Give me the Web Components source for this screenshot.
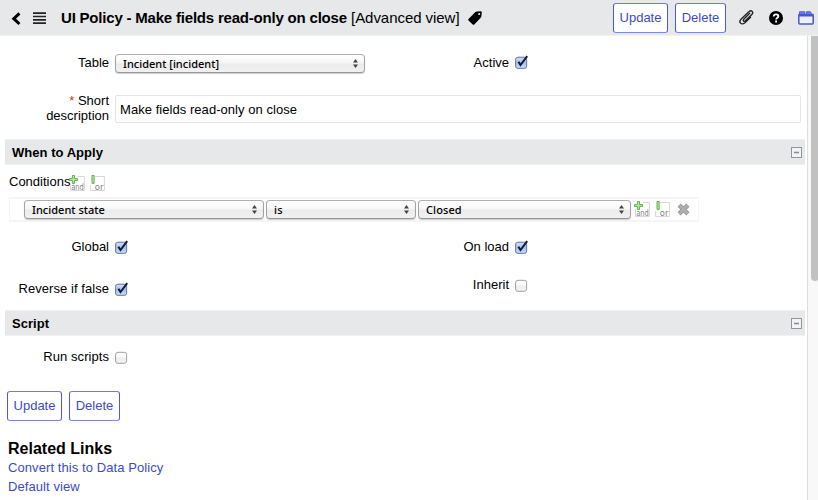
<!DOCTYPE html>
<html lang="en"><head><meta charset="utf-8"><title>UI Policy</title>
<style>
html,body{margin:0;height:100%;overflow:hidden;background:#fff;color:#000;font:13px/15px "Liberation Sans",Arial,sans-serif}
</style></head><body>
<policy-page></policy-page>
<script>
const define=(name,html)=>customElements.define(name,class extends HTMLElement{
  constructor(){super();const t=document.createElement('template');t.innerHTML=html;
    this.attachShadow({mode:'open'}).append(t.content.cloneNode(true));}
});

define('push-button',`<style>
:host{display:block;box-sizing:border-box;height:30px;border:1px solid #4a5bd2;border-top-color:#6d7ddc;border-bottom-color:#7a88df;border-radius:3px;background:#fff;color:#3c4bcb;text-align:center;line-height:28px;white-space:nowrap}
</style><slot></slot>`);

define('select-box',`<style>
:host{display:flex;box-sizing:border-box;height:19px;border:1px solid #a2a2a2;border-top-color:#b0b0b0;border-bottom-color:#979797;border-radius:4px;background:linear-gradient(#fff,#f6f6f6 48%,#ebebeb 52%,#f1f1f1);box-shadow:0 1px 1px #ccc;padding:0 6px 0 7px;align-items:center;justify-content:space-between;font:500 11px/16px "Noto Sans","Open Sans",sans-serif;letter-spacing:var(--track,.3px);white-space:nowrap}
svg{display:block;flex:none}
</style><span><slot></slot></span><svg width="5" height="9" viewBox="0 0 5 9" fill="#444"><path d="M2.5 0 5 3.5H0ZM0 5.5H5L2.5 9Z"/></svg>`);

define('check-box',`<style>
:host{display:block;width:15px;height:16px}
svg{display:block;overflow:visible}
.tick,.on{display:none}:host([checked]) .tick,:host([checked]) .on{display:block}
</style><svg width="15" height="16" viewBox="0 0 15 16">
<defs><linearGradient id="a" x2="0" y2="1"><stop stop-color="#fff"/><stop offset=".45" stop-color="#fafafa"/><stop offset=".55" stop-color="#eee"/><stop offset="1" stop-color="#f6f6f6"/></linearGradient>
<linearGradient id="b" x2="0" y2="1"><stop stop-color="#d5e2f6"/><stop offset=".5" stop-color="#9fc0eb"/><stop offset="1" stop-color="#c6e5fb"/></linearGradient></defs>
<rect x=".6" y="3.3" width="11" height="11" rx="2.4" fill="url(#a)" stroke="#a0a0a0"/>
<rect class="on" x=".6" y="3.3" width="11" height="11" rx="2.2" fill="url(#b)" stroke="#6f7fb0"/>
<path class="tick" d="M3.4 7.7 5.5 11 12.2 2.1" fill="none" stroke="#121a36" stroke-width="2"/></svg>`);

define('form-field',`<style>
:host{display:grid;grid-template-columns:109px 1fr;column-gap:6px}
.l{text-align:right;white-space:nowrap}
</style><div class="l"><slot name="label"></slot></div><div><slot></slot></div>`);

define('section-bar',`<style>
:host{display:flex;box-sizing:border-box;height:26px;margin:0 2px 0 5px;padding:0 3px 0 7px;background:#e6e8ea;border-top:1px solid #f0f1f2;border-bottom:1px solid #f0f1f2;align-items:center;justify-content:space-between;font-weight:bold;letter-spacing:.03px}
</style><span><slot></slot></span><svg width="11" height="11"><rect x=".5" y=".5" width="10" height="10" fill="#f2f3f5" stroke="#92969c"/><path d="M3 5.5h5" stroke="#8a8e94" stroke-width="1.6"/></svg>`);

define('and-or',`<style>
:host{display:flex;gap:4px;height:16px}
svg{display:block;overflow:visible}
text{font:9px "DejaVu Sans Condensed","DejaVu Sans",sans-serif;fill:#808080}
</style><svg width="16" height="16"><path d="M8.5 1.5h6.9v14H1.5V8" fill="#fff" stroke="#d8d8d8"/><path d="M3.4.5h2.1v3H8.5v2H5.5v3H3.4v-3H.5v-2h2.9Z" fill="#b4e39b" stroke="#69b452"/><text x="2.2" y="14.7" textLength="12.6" lengthAdjust="spacingAndGlyphs">and</text></svg>
<svg width="16" height="16"><path d="M6 1.5h9.4v14H1.5V10" fill="#fff" stroke="#d8d8d8"/><path d="M3 .5h2.1v7.8H3Z" fill="#c2e8ad" stroke="#5faf45"/><text x="5.8" y="14.7" textLength="8.6" lengthAdjust="spacingAndGlyphs">or</text></svg>`);

define('title-bar',`<style>
:host{display:flex;box-sizing:border-box;height:36px;padding:0 4px 0 11px;background:#e6e8ea;border-bottom:1px solid #f1f2f3;align-items:center}
svg{display:block;flex:none;overflow:visible}
h1{margin:0;font:bold 15px/18px "Liberation Sans",Arial,sans-serif;white-space:nowrap;padding:1px 0 0 15px}
h1 span{font-weight:normal}
.gap{flex:1}.one{letter-spacing:-.2px}.two{letter-spacing:-.05px}
push-button{margin-right:7px}
</style>
<svg width="10" height="14" viewBox="0 0 10 14"><path d="M8.4 1.7 2.8 7l5.6 5.3" transform="translate(0 .7)" fill="none" stroke="#000" stroke-width="3"/></svg>
<svg style="margin-left:12px" width="13" height="12"><path d="M0 1.2h13M0 4.5h13M0 7.8h13M0 11.1h13" stroke="#222" stroke-width="1.7"/></svg>
<h1><b class="one">UI Policy - Make fields read-only on close</b> <span class="two">[Advanced view]</span></h1>
<svg style="margin-left:8px" width="14" height="14" viewBox="0 0 14 14"><path d="M7.4 1.1Q8 .4 9 .4L12.6.3Q13.8.3 13.8 1.6L13.4 5.2Q13.3 6 12.7 6.7L6.3 13.4Q5.5 14.1 4.7 13.4L.5 9.6Q-.2 8.8.5 8ZM11.2 2.1a1 1 0 1 0 .1 2A1 1 0 0 0 11.2 2.1Z" fill-rule="evenodd"/></svg>
<div class="gap"></div>
<push-button style="width:55px">Update</push-button><push-button style="width:51px">Delete</push-button>
<svg style="margin-left:6px" width="15" height="15" viewBox="0 0 15 15" fill="none" stroke="#222" stroke-width="1.35" stroke-linecap="round"><path d="M10.7 3.3 4.7 9.3Q3.8 10.3 4.5 11T6.3 10.8L12.8 4.5Q14.6 2.7 13.2 1.4T9.8 1.7L2.2 8.9Q-.2 11.3 1.5 13.1T6 12.7L11.6 7.3"/></svg>
<svg style="margin-left:15px" width="14" height="14"><circle cx="7" cy="7" r="7"/><path d="M4.7 5.5C4.8 3.9 5.7 3.3 7 3.3S9.4 4 9.4 5.2C9.4 6.8 7.2 6.7 7.2 8.5M7.1 9.6v1.9" fill="none" stroke="#fff" stroke-width="1.8"/></svg>
<svg style="margin-left:15px" width="16" height="14" viewBox="0 0 16 14"><path d="M1.5.8h5.2v3H1.5ZM8.3.8h4.2l1.4 3H8.3Z" fill="#6f80df" stroke="#4e60d4"/><rect x=".8" y="4.3" width="14.4" height="8.6" rx="1" fill="#eef0fa" stroke="#4658d2" stroke-width="1.5"/><path d="M.2 4.2h15.6" stroke="#4658d2" stroke-width="2.6"/></svg>`);

define('condition-row',`<style>
:host{display:flex;box-sizing:border-box;width:690px;height:25px;margin-left:9px;border:2px solid #f5f5f5;border-width:2px 1px;padding:1px 0 0 14px;gap:2px;align-items:flex-start}
and-or{margin:1px 0 0 1px}
svg{display:block;margin:3px 0 0 5px}
</style>
<select-box style="width:240px;--track:.02px">Incident state</select-box>
<select-box style="width:150px">is</select-box>
<select-box style="width:213px;--track:.1px">Closed</select-box>
<and-or></and-or>
<svg width="13" height="13"><path d="M2.1 2.1l8.8 8.8M10.9 2.1l-8.8 8.8" stroke="#979797" stroke-width="4.4"/><path d="M2.4 2.4l8.2 8.2M10.6 2.4l-8.2 8.2" stroke="#b0b0b0" stroke-width="2.6"/></svg>`);

define('related-links',`<style>
:host{display:block;padding:18px 0 0 8px}
h2{margin:0;font:bold 16px/19px "Liberation Sans",Arial,sans-serif}
a{display:block;color:#3c4bcb;line-height:19px;width:max-content;letter-spacing:.08px}
</style><h2>Related Links</h2><a>Convert this to Data Policy</a><a>Default view</a>`);

define('policy-page',`<style>
:host{display:flex;flex-direction:column;height:500px;overflow:hidden}
.body{display:flex;flex:1;min-height:0}
main{width:807px;flex:none}
.rail{flex:1;box-sizing:border-box;border-left:1px solid #dedede;background:#f8f8f8;display:flex;justify-content:flex-end}
.thumb{width:8px;height:245px;background:#c1c1c1;border-radius:0 0 4px 4px;margin-right:-1px}
.row{display:grid;grid-template-columns:400px 1fr;align-items:start;box-sizing:border-box}
.input{box-sizing:border-box;width:686px;height:28px;border:1px solid #e4e4e4;border-radius:2px;padding:1px 0 0 4px;line-height:26px;letter-spacing:.05px}
.req{color:#c0392b}
.down{display:inline-block;padding-top:1px}
.short{margin-top:-2px}
.cond{display:flex;padding-left:9px}
.buttons{display:flex;gap:7px;padding-left:7px}
</style>
<title-bar></title-bar>
<div class="body"><main>
<div class="row" style="height:59px;padding-top:18px">
<form-field><span slot="label" class="down">Table</span><select-box style="width:250px;--track:0px">Incident [incident]</select-box></form-field>
<form-field><span slot="label" class="down">Active</span><check-box checked></check-box></form-field></div>
<form-field style="height:44px"><div slot="label" class="short"><span class="req">*</span> Short<br>description</div><div class="input">Make fields read-only on close</div></form-field>
<section-bar>When to Apply</section-bar>
<div style="height:32px;padding-top:9px;box-sizing:border-box"><div class="cond"><span>Conditions</span><and-or style="margin:1px 0 0 -1px"></and-or></div></div>
<condition-row></condition-row>
<div class="row" style="height:43px;padding-top:17px">
<form-field><span slot="label">Global</span><check-box checked></check-box></form-field>
<form-field><span slot="label">On load</span><check-box checked></check-box></form-field></div>
<div class="row" style="height:45px;padding-top:12px">
<form-field style="padding-top:4px"><span slot="label" style="letter-spacing:.06px">Reverse if false</span><check-box checked></check-box></form-field>
<form-field><span slot="label">Inherit</span><check-box></check-box></form-field></div>
<section-bar>Script</section-bar>
<div class="row" style="height:55px;padding-top:13px"><form-field><span slot="label" style="letter-spacing:.06px">Run scripts</span><check-box></check-box></form-field></div>
<div class="buttons"><push-button style="width:55px">Update</push-button><push-button style="width:51px">Delete</push-button></div>
<related-links></related-links>
</main><div class="rail"><div class="thumb"></div></div></div>`);
</script></body></html>
